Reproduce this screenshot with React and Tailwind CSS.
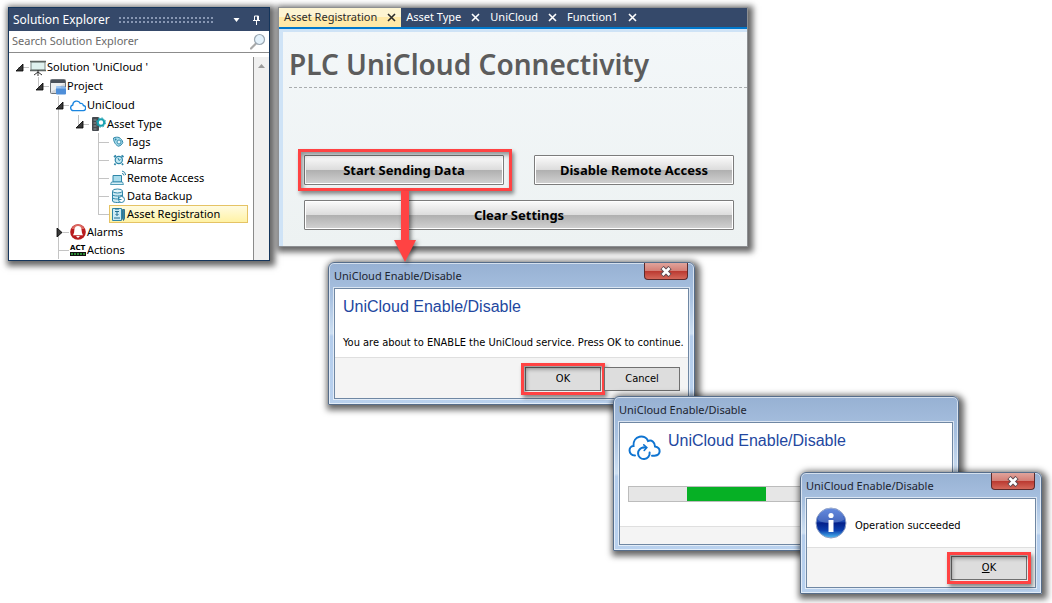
import React, { useState } from "react";
import { clsx } from "clsx";

const PresentationIcon = () => (
  <svg viewBox="0 0 16 16" className="w-4 h-4">
    <rect x="1" y="2" width="14" height="8" fill="#dff1ef" stroke="#7d8785" />
    <path d="M0 1.5h16M0 10.5h16" stroke="#5c6462" strokeWidth="1.4" />
    <path d="M8 10v3M8 12l-4 3M8 12l4 3M8 12v4" stroke="#333" fill="none" />
  </svg>
);

const ProjectIcon = () => (
  <svg viewBox="0 0 16 16" className="w-4 h-4">
    <rect x="0.5" y="0.5" width="15" height="14" rx="1" fill="#d3d6da" stroke="#6d737a" />
    <path d="M1 1h14v3H1z" fill="#4a515b" />
    <path d="M1 4h14L1 13z" fill="#eceef0" />
    <rect x="6" y="7.5" width="10" height="8" rx="1" fill="#4f8fd9" />
    <path d="M6 9.500h10V8.200h-5L10 7H7L6 8z" fill="#9fc6f2" />
  </svg>
);

const CloudIcon = () => (
  <svg viewBox="0 0 16 16" className="w-4 h-4">
    <path
      d="M3.500 12.700h9.300a2.600 2.600 0 0 0 .5-5.200 2.200 2.200 0 0 0-3-2A3.900 3.900 0 0 0 2.800 7a2.900 2.900 0 0 0 .7 5.700z"
      fill="#fff"
      stroke="#1b86e0"
      strokeWidth="1.300"
    />
  </svg>
);

const AssetTypeIcon = () => (
  <svg viewBox="0 0 16 16" className="w-4 h-4">
    <rect x="2" y="1" width="7" height="14" rx="1" fill="#454a4f" />
    <path d="M3.500 4h3M3.500 7h3M3.500 10h3M3.500 13h3" stroke="#a9afb4" strokeWidth="0.8" />
    <circle cx="11" cy="6.500" r="3.200" fill="#fff" stroke="#18a0b0" strokeWidth="2" />
    <circle cx="11" cy="6.500" r="4.600" fill="none" stroke="#18a0b0" strokeDasharray="1.800 1.810" />
  </svg>
);

const TagIcon = () => (
  <svg viewBox="0 0 16 16" className="w-4 h-4">
    <path
      d="M3.500 4c2-1 4-1 5.500-.5 2 1 3.500 3 3.800 5-.8 2-2.300 3.200-4.300 3.700C6 11.500 3.500 8 3.500 4z"
      fill="#a6dcec"
      stroke="#2f86a8"
    />
    <circle cx="9" cy="8" r="2" fill="#e4f6fb" stroke="#2f86a8" strokeWidth="0.900" />
    <circle cx="5.700" cy="5.500" r="0.900" fill="#2f86a8" />
  </svg>
);

const ClockIcon = () => (
  <svg viewBox="0 0 16 16" className="w-4 h-4">
    <path
      d="M4 5l2-1.500M11.500 3.500L13.500 5M5.500 11.500l-1 1.500M12 11.500l1 1.500"
      stroke="#2f86a8"
      strokeWidth="1.800"
    />
    <circle cx="8.800" cy="8" r="3.600" fill="#c6eaf4" stroke="#2f86a8" strokeWidth="1.200" />
    <path d="M8 6l1 2.500 1.500-1" stroke="#2f86a8" fill="none" />
  </svg>
);

const LaptopIcon = () => (
  <svg viewBox="0 0 16 16" className="w-4 h-4">
    <path d="M3 5.500h8.500v6.500H3z" fill="#a9dcec" stroke="#2f86a8" />
    <path d="M1.500 12h11l1 2.500H0.500z" fill="#d8f0f7" stroke="#2f86a8" strokeWidth="0.800" />
    <path d="M12 3.500a2 2 0 0 1 2 2M12 1a4.500 4.500 0 0 1 3.700 4" stroke="#2f86a8" fill="none" />
  </svg>
);

const DatabaseIcon = () => (
  <svg viewBox="0 0 16 16" className="w-4 h-4">
    <path d="M2.500 3v10c0 2 10 2 10 0V3" fill="#cdebf4" stroke="#2f86a8" />
    <ellipse cx="7.500" cy="3" rx="5" ry="2" fill="#e8f7fb" stroke="#2f86a8" />
    <path d="M2.500 6.500c0 2 10 2 10 0M2.500 9.500c0 2 10 2 10 0" fill="none" stroke="#2f86a8" />
    <circle cx="11.500" cy="11.500" r="3" fill="#fff" stroke="#2f86a8" />
    <path d="M8.500 8.500v3h3" fill="none" stroke="#2f86a8" />
  </svg>
);

const RegistrationIcon = () => (
  <svg viewBox="0 0 16 16" className="w-4 h-4">
    <path d="M2.500 2.500h9v12h-9z" fill="#cdebf4" stroke="#2f86a8" />
    <path d="M5 3h4M5 5.500h4M7 5.500v4M5.500 8L7 9.500 8.500 8M4 12h6" fill="none" stroke="#1f6f90" />
    <path d="M12.500 3.500h2v9l-1 2-1-2z" fill="#2f86a8" stroke="#1f5f80" strokeWidth="0.800" />
  </svg>
);

const BellIcon = () => (
  <svg viewBox="0 0 16 16" className="w-4 h-4">
    <circle cx="8" cy="8" r="7.800" fill="#b81b1e" />
    <path d="M1.500 5a7 7 0 0 1 13 0z" fill="#dc6860" />
    <path
      d="M8 2c3.500 0 3.600 3.500 3.800 5.500.1 1.800.7 2.500 1.200 3.800H3c.5-1.300 1.100-2 1.200-3.800C4.400 5.500 4.500 2 8 2z"
      fill="#fff"
    />
    <path d="M6 12h4l-2 2z" fill="#fff" />
  </svg>
);

const ActionsIcon = () => (
  <span className="w-4 flex flex-col">
    <span className="text-[7px] leading-[7px] font-bold font-['DejaVu_Sans',sans-serif] text-black">
      ACT
    </span>
    <svg viewBox="0 0 16 4" className="w-4 h-1">
      <path d="M0 0h16v4H0z" fill="#111" />
      <path d="M1 2h14" stroke="#2c8a35" strokeWidth="2" strokeDasharray="2 1" />
    </svg>
  </span>
);

const InfoIcon = () => (
  <svg viewBox="0 0 32 32" className="w-8 h-8 shrink-0">
    <defs>
      <linearGradient id="info" x1="0" y1="0" x2="0" y2="1">
        <stop offset="0" stopColor="#3f6fd8" />
        <stop offset="0.450" stopColor="#1c46b0" />
        <stop offset="0.500" stopColor="#04208a" />
        <stop offset="0.750" stopColor="#0c3fae" />
        <stop offset="1" stopColor="#4fc0f5" />
      </linearGradient>
    </defs>
    <circle cx="16" cy="16" r="15" fill="url(#info)" stroke="#8fa0c4" />
    <path d="M3 13a13 12 0 0 1 26 0c-6 3-20 5-26 0z" fill="#fff" opacity="0.200" />
    <circle cx="16" cy="8.500" r="2.600" fill="#fff" />
    <path d="M13.500 13h5v12h-5z" fill="#fff" />
  </svg>
);

const CloudSyncIcon = () => (
  <svg viewBox="0 0 34 26" className="w-[34px] h-[26px] shrink-0">
    <g fill="none" stroke="#0f74d1" strokeWidth="2" strokeLinecap="round">
      <path d="M7 20.500C0 20 0 11.500 5.500 11 4.500 0.500 17.500-1.500 20 6c4-1.500 7 1.500 7 5.500 6 1 6.500 8.500-0.500 9.200h-2.500" />
      <path d="M16 12.500a5.800 5.800 0 1 0 5.600 5" />
      <path d="M14.500 12.500h3.500M15.800 9.800l3 2.700-2.600 3" strokeWidth="1.600" />
    </g>
  </svg>
);

// guides: which ancestor columns carry a vertical line through the row
const treeItems = [
  { label: "Solution 'UniCloud '", icon: PresentationIcon, depth: 0, guides: [], expander: "open", tall: true, root: true },
  { label: "Project", icon: ProjectIcon, depth: 1, guides: [], expander: "open", tall: true },
  { label: "UniCloud", icon: CloudIcon, depth: 2, guides: [], expander: "open", tall: true, more: true },
  { label: "Asset Type", icon: AssetTypeIcon, depth: 3, guides: [2], expander: "open" },
  { label: "Tags", icon: TagIcon, depth: 4, guides: [2], more: true },
  { label: "Alarms", icon: ClockIcon, depth: 4, guides: [2], more: true },
  { label: "Remote Access", icon: LaptopIcon, depth: 4, guides: [2], more: true },
  { label: "Data Backup", icon: DatabaseIcon, depth: 4, guides: [2], more: true },
  { label: "Asset Registration", icon: RegistrationIcon, depth: 4, guides: [2] },
  { label: "Alarms", icon: BellIcon, depth: 2, guides: [], expander: "closed", more: true },
  { label: "Actions", icon: ActionsIcon, depth: 2, guides: [], more: true },
];

const TreeRow = ({ item, selected, onSelect }) => {
  const Icon = item.icon;
  return (
    <li className={clsx("flex", item.tall ? "h-[19px]" : "h-[18px]")}>
      {Array.from({ length: item.depth }, (_, i) => (
        <span key={i} className="w-5 pl-[9px] flex shrink-0">
          {item.guides.includes(i) && <span className="border-l border-[#c4c4c4]" />}
        </span>
      ))}
      <span className="relative w-5 pl-[9px] flex flex-col shrink-0">
        <span
          className={clsx(
            "flex-1 border-b border-[#c4c4c4]",
            !item.root && "border-l"
          )}
        />
        <span className={clsx("flex-1 border-[#c4c4c4]", item.more && "border-l")} />
        {item.expander && (
          <button
            aria-label={`Toggle ${item.label}`}
            className="absolute inset-0 flex items-center justify-center"
          >
            <svg viewBox="0 0 9 9" className="w-[9px] h-[9px]">
              <path
                d={item.expander === "open" ? "M8 1v7H1z" : "M2 0l5 4.500L2 9z"}
                fill="#3a3a3a"
                stroke="#000"
                strokeWidth="0.800"
              />
            </svg>
          </button>
        )}
      </span>
      <button
        onClick={onSelect}
        className={clsx(
          "flex items-center gap-px border text-left whitespace-nowrap",
          selected
            ? "w-[139px] border-[#e5c365] bg-linear-to-b from-[#fffbe0] to-[#fff2a4]"
            : "border-transparent"
        )}
      >
        <span className="w-4 shrink-0">
          <Icon />
        </span>
        {item.label}
      </button>
    </li>
  );
};

const SolutionExplorer = () => {
  const [selected, setSelected] = useState("Asset Registration");

  return (
    <section className="absolute left-2 top-[7px] w-[262px] border border-[#16365c] bg-white text-[11px] shadow-[2px_2px_6px_3px_rgba(0,0,0,0.6)]">
      <header className="flex items-center h-[23px] px-1 bg-[#35496a] text-white">
        <h2 className="text-xs whitespace-nowrap">Solution Explorer</h2>
        <span className="flex-1 h-2 ml-2 mr-5 bg-[radial-gradient(#8797b3_30%,transparent_35%)] bg-[size:4px_4px]" />
        <button aria-label="Window position" className="mr-3">
          <svg viewBox="0 0 7 4" className="w-[7px] h-1">
            <path d="M0.500 0h6L3.500 4z" fill="#fff" />
          </svg>
        </button>
        <button aria-label="Auto hide" className="mr-1">
          <svg viewBox="0 0 9 10" className="w-[9px] h-[10px]">
            <path d="M1 5.500h7M4.500 6v4M2.500 1h4M2.500 1v4" stroke="#fff" fill="none" />
            <path d="M5 1h2v4H5z" fill="#fff" />
          </svg>
        </button>
      </header>
      <label className="flex items-center h-[22px] px-[3px] border-b border-[#8c8c8c]">
        <input
          type="search"
          aria-label="Search Solution Explorer"
          placeholder="Search Solution Explorer"
          className="flex-1 min-w-0 outline-none placeholder:text-[#6a6a6a]"
        />
        <svg viewBox="0 0 16 17" className="w-4 h-[17px]">
          <path d="M6 10.500l-5 5" stroke="#a9a9a9" strokeWidth="2.200" strokeLinecap="round" />
          <circle cx="9.500" cy="6.500" r="5" fill="#e3f1fb" stroke="#9aa7b2" strokeWidth="1.200" />
        </svg>
      </label>
      <div className="flex pt-1">
        <ul className="flex-1 min-w-0 pt-px pb-px">
          {treeItems.map((item, i) => (
            <TreeRow
              key={i}
              item={item}
              selected={selected === item.label}
              onSelect={() => setSelected(item.label)}
            />
          ))}
        </ul>
        <div className="w-4 border-l border-[#8a8a8a] bg-[#f0f0f0] flex justify-center pt-[7px]">
          <svg viewBox="0 0 7 4" className="w-[7px] h-1">
            <path d="M0 4h7L3.500 0z" fill="#9a9a9a" />
          </svg>
        </div>
      </div>
    </section>
  );
};

const tabs = ["Asset Registration", "Asset Type", "UniCloud", "Function1"];

const GlossButton = ({ className, children }) => (
  <button
    className={clsx(
      "h-[30px] pt-px border border-[#7c7c7c] rounded-[1px] text-[13px] font-bold text-black",
      "bg-[linear-gradient(#fbfbfb,#dcdcdc_50%,#b0b0b0_51%,#d2d2d2)] shadow-[inset_0_0_0_1px_#fff]",
      className
    )}
  >
    {children}
  </button>
);

const Highlight = ({ className }) => (
  <span
    className={clsx(
      "absolute border-3 border-[#ff4343] shadow-[2px_3px_4px_rgba(0,0,0,0.45),inset_2px_3px_4px_rgba(0,0,0,0.4)] pointer-events-none",
      className
    )}
  />
);

const EditorWindow = () => (
  <section className="absolute left-[278px] top-[7px] w-[470px] border border-[#8d8f92] bg-[#cfe3f6] shadow-[2px_2px_6px_3px_rgba(0,0,0,0.6)]">
    <nav className="flex h-[21px] bg-[#35496a] border-b-2 border-[#0078cc] text-[11px] text-white">
      {tabs.map((tab, i) => (
        <div
          key={tab}
          className={clsx(
            "flex items-center gap-[10px] px-[5px]",
            i === 0 && "bg-[linear-gradient(#fdf4d2_45%,#ffe9a8_50%)] text-[#2b2b2b]"
          )}
        >
          <button className="whitespace-nowrap">{tab}</button>
          <button aria-label={`Close ${tab}`}>
            <svg viewBox="0 0 9 9" className="w-[9px] h-[9px]">
              <path d="M1 1l7 7M8 1L1 8" stroke="currentColor" strokeWidth="1.600" />
            </svg>
          </button>
        </div>
      ))}
    </nav>
    <div className="mt-[3px] ml-1 pl-[6px] pb-4 bg-linear-to-b from-[#f3f7f9] to-[#edf2f2]">
      <h1 className="pt-[10px] pb-px text-[28px] leading-[44px] font-semibold text-[#5c5c5c] border-b border-dashed border-[#a9adaf]">
        PLC UniCloud Connectivity
      </h1>
      <div className="grid grid-cols-2 gap-x-[30px] gap-y-[15px] pt-[67px] pl-[15px] pr-[13px]">
        <div className="relative flex">
          <GlossButton className="flex-1">Start Sending Data</GlossButton>
          <Highlight className="-inset-[6px] -right-2" />
        </div>
        <GlossButton>Disable Remote Access</GlossButton>
        <GlossButton className="col-span-2">Clear Settings</GlossButton>
      </div>
    </div>
  </section>
);

const Dialog = ({ className, closable, children, footer, footerClass }) => (
  <section
    className={clsx(
      "absolute border border-[#566d8a] rounded-t-md px-[5px] pb-[5px]",
      "bg-[linear-gradient(#97b1d3,#a9c2e1_25%,#cddff2_50%,#b4cdec_52%,#b9d1ee)]",
      "shadow-[inset_0_0_0_1px_rgba(255,255,255,0.6),2px_2px_6px_3px_rgba(0,0,0,0.6)]",
      className
    )}
  >
    <header className="flex justify-between h-[25px]">
      <h2 className="text-[11px] leading-[26px] text-[#1c2430]">UniCloud Enable/Disable</h2>
      {closable && (
        <button
          aria-label="Close"
          className="flex items-center justify-center w-11 h-[17px] mr-px border border-t-0 border-[#5b2b2c] rounded-b-sm bg-[linear-gradient(#e0a49c,#d47f76_48%,#bb3a31_52%,#d4685a)]"
        >
          <svg viewBox="0 0 14 11" className="w-[14px] h-[11px]">
            <path d="M3 1.500l8 8M11 1.500l-8 8" stroke="#5d4a50" strokeWidth="4.600" />
            <path d="M3.500 2l7 7M10.500 2l-7 7" stroke="#fff" strokeWidth="2.600" />
          </svg>
        </button>
      )}
    </header>
    <div className="border border-[#6f87a3] bg-white shadow-[0_0_0_1px_rgba(255,255,255,0.6)] font-['DejaVu_Sans_Condensed','DejaVu_Sans',sans-serif] text-[11px]">
      {children}
      <footer className={clsx("border-t border-[#dfdfdf] bg-[#f4f4f4] flex justify-end", footerClass)}>
        {footer}
      </footer>
    </div>
  </section>
);

const DialogButton = ({ children, highlighted }) => (
  <span className="relative flex w-[76px] h-6">
    <button className="flex-1 border border-[#707070] bg-[#dddddd] text-black">
      {children}
    </button>
    {highlighted && <Highlight className="-inset-1" />}
  </span>
);

const DialogHeading = ({ children }) => (
  <h3 className="font-['Liberation_Sans',sans-serif] text-base leading-5 text-[#2347a0] whitespace-nowrap">
    {children}
  </h3>
);

const App = () => {
  return (
    <main className="relative min-h-screen overflow-hidden bg-white text-black font-['Noto_Sans',sans-serif]">
      <SolutionExplorer />
      <EditorWindow />

      <Dialog
        className="left-[328px] top-[262px] w-[367px]"
        closable
        footerClass="gap-[3px] pt-[9px] pb-[7px] pr-2"
        footer={
          <>
            <DialogButton highlighted>OK</DialogButton>
            <DialogButton>Cancel</DialogButton>
          </>
        }
      >
        <div className="px-2 pt-2 pb-[6px]">
          <DialogHeading>UniCloud Enable/Disable</DialogHeading>
          <p className="pt-[18px] leading-4 whitespace-nowrap">
            You are about to ENABLE the UniCloud service. Press OK to continue.
          </p>
        </div>
      </Dialog>

      {/* arrow from the highlighted button to the first dialog */}
      <svg
        viewBox="0 0 22 72"
        className="absolute left-[394px] top-[191px] w-[22px] h-[72px] drop-shadow-[2px_2px_2px_rgba(0,0,0,0.5)]"
      >
        <path d="M7 0h8v49h7L11 71 0 49h7z" fill="#ff4343" />
      </svg>

      <Dialog className="left-[613px] top-[396px] w-[346px]" footerClass="h-[18px]">
        <div className="px-2 pt-2 pb-6">
          <div className="flex gap-[6px]">
            <span className="pt-1">
              <CloudSyncIcon />
            </span>
            <DialogHeading>UniCloud Enable/Disable</DialogHeading>
          </div>
          <div
            role="progressbar"
            aria-label="Enabling UniCloud"
            className="flex mt-[25px] h-4 border border-[#bcbcbc] bg-[#e6e6e6]"
          >
            <div className="w-1/4 ml-[58px] bg-[#06b025]" />
          </div>
        </div>
      </Dialog>

      <Dialog
        className="left-[800px] top-[472px] w-[242px]"
        closable
        footerClass="pt-2 pb-[7px] pr-2"
        footer={
          <DialogButton highlighted>
            <span className="underline">O</span>K
          </DialogButton>
        }
      >
        <div className="flex items-center gap-2 h-12 px-2">
          <InfoIcon />
          <p className="pt-[6px]">Operation succeeded</p>
        </div>
      </Dialog>
    </main>
  );
};

export default App;
